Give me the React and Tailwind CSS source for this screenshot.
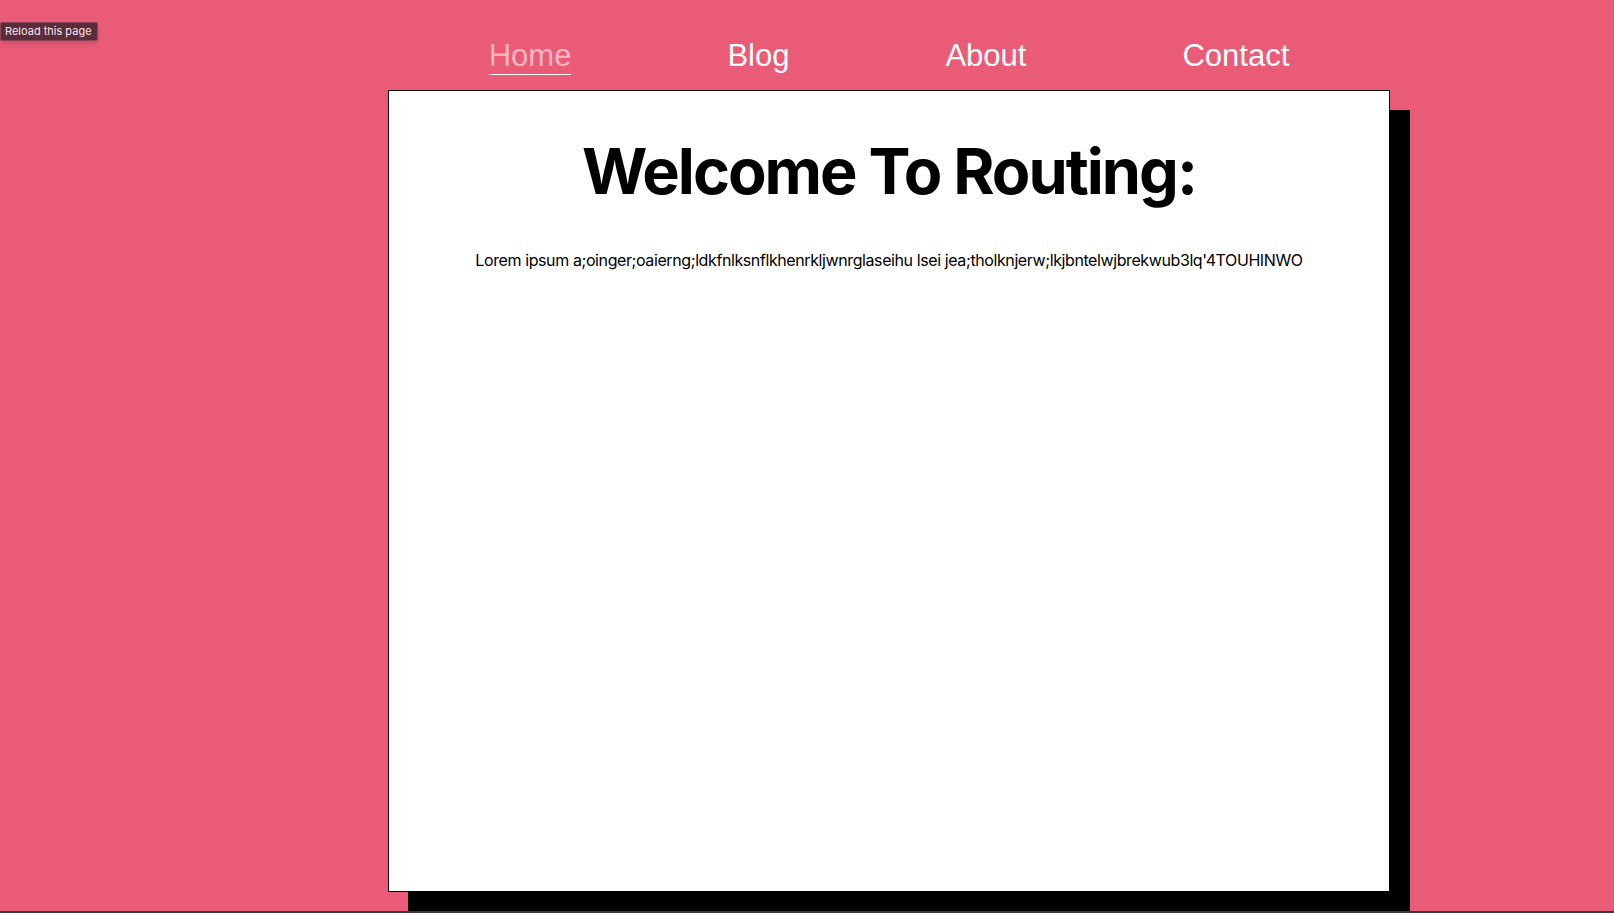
const LINKS = [
  { label: 'Home', active: true },
  { label: 'Blog' },
  { label: 'About' },
  { label: 'Contact' },
]

function NavBar() {
  return (
    <nav className="w-[1002px] ml-[388px] h-[75px]">
      <ul className="flex justify-center gap-[156px] pt-[38px]">
        {LINKS.map(({ label, active }) => (
          <li key={label}>
            <a
              href="#"
              className={
                active
                  ? 'block text-[31px] leading-[36px] text-[#ffb6c1] border-b border-white'
                  : 'block text-[31px] leading-[36px] text-white'
              }
              style={{ fontFamily: '"Liberation Sans", Arial, sans-serif' }}
            >
              {label}
            </a>
          </li>
        ))}
      </ul>
    </nav>
  )
}

export default function App() {
  return (
    <div className="relative min-h-[913px] bg-[#ea5b77] overflow-hidden">
      {/* browser tooltip caught in the shot */}
      <div className="absolute left-0 top-[22px] h-[19px] w-[98px] rounded-[2px] border border-[#8a4656] bg-[#5c2c3b] flex items-center pl-[4px] text-[11px] text-[#f2e6ea] font-['Inter',sans-serif] shadow-md">
        Reload this page
      </div>

      <NavBar />

      <main
        className="mt-[15px] ml-[388px] w-[1002px] h-[802px] bg-white border border-black shadow-[20px_20px_0_0_#000] pt-[49px]"
        style={{ fontFamily: 'Inter, "Noto Sans", sans-serif' }}
      >
        <h1 className="text-center text-[63px] leading-none font-bold tracking-[-2px] text-black">
          Welcome To Routing:
        </h1>
        <p className="mt-[45px] text-center text-[16px] leading-[24px] tracking-[-0.4px] text-black">
          Lorem ipsum a;oinger;oaierng;ldkfnlksnflkhenrkljwnrglaseihu lsei jea;tholknjerw;lkjbntelwjbrekwub3lq'4TOUHINWO
        </p>
      </main>

      <div className="fixed bottom-0 left-0 w-full h-[2px] bg-[#3a3a3a]" />
    </div>
  )
}
